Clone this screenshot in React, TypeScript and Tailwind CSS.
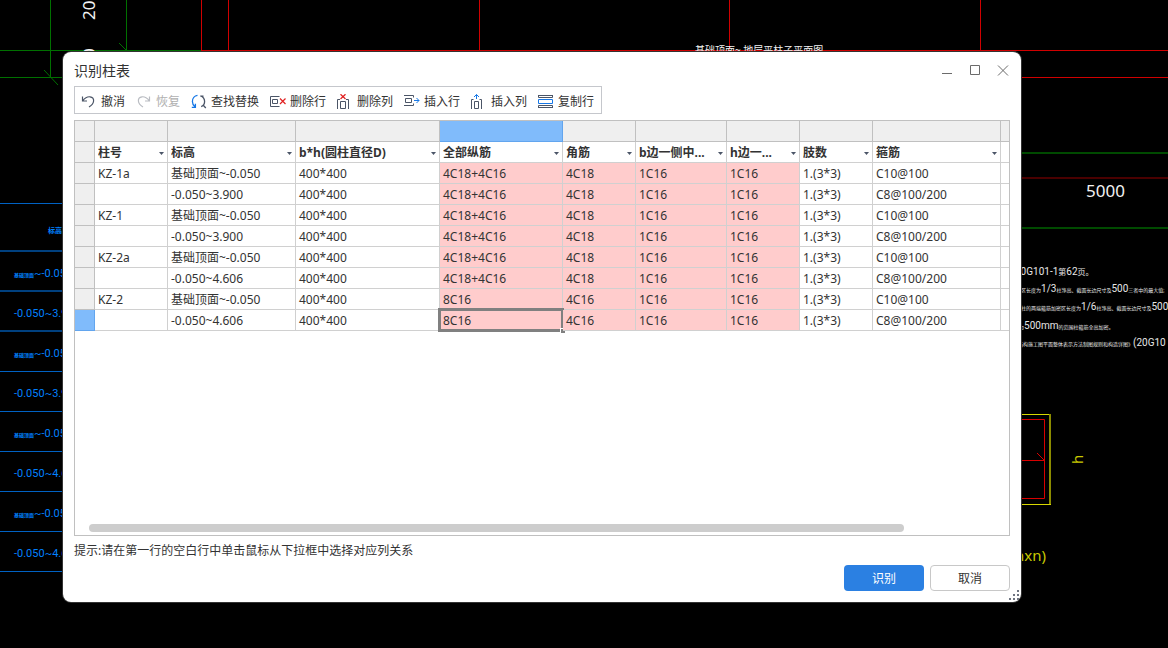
import React, { useState } from 'react';
import clsx from 'clsx';

type Row = string[];

const columns = [
  { label: '柱号', width: 'w-[73px]' },
  { label: '标高', width: 'w-[128px]' },
  { label: 'b*h(圆柱直径D)', width: 'w-[144px]' },
  { label: '全部纵筋', width: 'w-[123px]', marked: true },
  { label: '角筋', width: 'w-[73px]', marked: true },
  { label: 'b边一侧中...', width: 'w-[91px]', marked: true },
  { label: 'h边一...', width: 'w-[73px]', marked: true },
  { label: '肢数', width: 'w-[73px]' },
  { label: '箍筋', width: 'w-[128px]' },
];

const rows: Row[] = [
  ['KZ-1a', '基础顶面~-0.050', '400*400', '4C18+4C16', '4C18', '1C16', '1C16', '1.(3*3)', 'C10@100'],
  ['', '-0.050~3.900', '400*400', '4C18+4C16', '4C18', '1C16', '1C16', '1.(3*3)', 'C8@100/200'],
  ['KZ-1', '基础顶面~-0.050', '400*400', '4C18+4C16', '4C18', '1C16', '1C16', '1.(3*3)', 'C10@100'],
  ['', '-0.050~3.900', '400*400', '4C18+4C16', '4C18', '1C16', '1C16', '1.(3*3)', 'C8@100/200'],
  ['KZ-2a', '基础顶面~-0.050', '400*400', '4C18+4C16', '4C18', '1C16', '1C16', '1.(3*3)', 'C10@100'],
  ['', '-0.050~4.606', '400*400', '4C18+4C16', '4C18', '1C16', '1C16', '1.(3*3)', 'C8@100/200'],
  ['KZ-2', '基础顶面~-0.050', '400*400', '8C16', '4C16', '1C16', '1C16', '1.(3*3)', 'C10@100'],
  ['', '-0.050~4.606', '400*400', '8C16', '4C16', '1C16', '1C16', '1.(3*3)', 'C8@100/200'],
];

const Icon: React.FC<{ children: React.ReactNode }> = ({ children }) => (
  <svg className="h-4 w-4 shrink-0" viewBox="0 0 16 16" fill="none" stroke="#4b5567" aria-hidden="true">
    {children}
  </svg>
);

const tools = [
  {
    label: '撤消',
    icon: (
      <Icon>
        <path d="M1.500 2.500V7H6M1.800 6.700C4 3.900 6.600 2.500 9 2.800c2.400.3 3.800 2 3.600 4.200-.2 2.400-1.800 4.300-4.600 6" strokeWidth="1.2" />
      </Icon>
    ),
  },
  {
    label: '恢复',
    disabled: true,
    icon: (
      <Icon>
        <path d="M13.500 2.500V7H9M13.200 6.700C11 3.900 8.400 2.500 6 2.800 3.600 3.100 2.200 4.800 2.400 7c.2 2.400 1.800 4.300 4.600 6" stroke="#b9bcc2" strokeWidth="1.2" />
      </Icon>
    ),
  },
  {
    label: '查找替换',
    icon: (
      <Icon>
        <path d="M6.500 1.300C3.500 1.700 1.400 4.400 1.400 7.500c0 2.200 1 4 2.600 5.200M.8 13.300h3.600V9.800" stroke="#1677e6" strokeWidth="1.300" />
        <path d="M9.300 2.200h3.200M9.600 1.800c2.600 1 4 3.100 4 5.700 0 2.400-1.200 4.300-3.400 5.200M11.800 10.800l3 3.200" strokeWidth="1.300" />
      </Icon>
    ),
  },
  {
    label: '删除行',
    icon: (
      <Icon>
        <path d="M9.500 2.500H.5v10h9M2.500 5.500h5v4h-5z" />
        <path d="M10 4.500l5.500 5.500M15.500 4.500L10 10" stroke="#e02020" strokeWidth="1.200" />
      </Icon>
    ),
  },
  {
    label: '删除列',
    icon: (
      <Icon>
        <path d="M.5 15v-9.500h2.500M11.500 15v-9.500h-2.500M3.500 7.500h5v7h-5z" />
        <path d="M3.500.2l5 4.800M8.500.2l-5 4.800" stroke="#e02020" strokeWidth="1.200" />
      </Icon>
    ),
  },
  {
    label: '插入行',
    icon: (
      <Icon>
        <path d="M0 1.500h9.500v2M0 11.500h9.500v-2M1.500 4.500h6v4h-6z" />
        <path d="M10 6.500h5M12.500 4l2.500 2.500L12.500 9" stroke="#1677e6" />
      </Icon>
    ),
  },
  {
    label: '插入列',
    icon: (
      <Icon>
        <path d="M.5 15v-9.500h2M10.500 15v-9.500h-2M3.500 7.500h4v7h-4z" />
        <path d="M5.500 5V.5M3 3L5.500.5 8 3" stroke="#1677e6" />
      </Icon>
    ),
  },
  {
    label: '复制行',
    icon: (
      <Icon>
        <path d="M.5 1v2.500h14V1M0 1.500h15M.5 14v-2.500h14V14M0 13.500h15" />
        <path d="M.5 5.500h14v4H.5z" stroke="#1677e6" />
      </Icon>
    ),
  },
];

const sideRows = [277, 317, 357, 397, 437, 477, 517, 557];
const sideValues = ['', '-0.050~3.9', '', '-0.050~3.9', '', '-0.050~4.6', '', '-0.050~4.6'];

// CAD sheet behind the dialog
const Drawing: React.FC = () => (
  <svg
    className="absolute inset-0 h-full w-full font-['Noto_Sans','Noto_Sans_CJK_SC',sans-serif]"
    fill="none"
    aria-hidden="true"
  >
    <g stroke="#007000">
      <path d="M50.500 0v78M126.500 0v52M0 50.500h201M0 77.500h70M44 70l14 15M119 43l9 9" />
    </g>
    <g stroke="#d00000">
      <path d="M201.500 0v50M228.500 0v50M479.500 0v50M729.500 0v50M980.500 0v50M201 50.500h967M1015 77.500h153" />
    </g>
    <path d="M1015 153h153M1015 228h153" stroke="#004a00" strokeWidth="2" />
    <path d="M1015 178h153" stroke="#4a0000" strokeWidth="2" />

    <g fill="#f2f2f2">
      <text transform="translate(95 20) rotate(-90)" fontSize="17">20</text>
      <text transform="translate(95 58) rotate(-90)" fontSize="17">0</text>
      <text x="695" y="54" fontSize="10">基础顶面~ 地层平柱子平面图</text>
      <text x="1086" y="197" fontSize="17">5000</text>
    </g>

    <g fill="#e6e6e6" fontSize="10" className="font-['Roboto','Noto_Sans_CJK_SC',sans-serif]">
      <text x="1015" y="275">20G101-1<tspan fontSize="8">第</tspan>62<tspan fontSize="8">页。</tspan></text>
      <text x="1021" y="292" fontSize="5">
        区长度为<tspan fontSize="10">1/3</tspan>柱净高、截面长边尺寸及<tspan fontSize="10">500</tspan>三者中的最大值;
      </text>
      <text x="1021" y="310" fontSize="5">
        柱的两端箍筋加密区长度为<tspan fontSize="10">1/6</tspan>柱净高、截面长边尺寸及<tspan fontSize="10">500</tspan>
      </text>
      <text x="1019" y="329" fontSize="5">
        为<tspan fontSize="10">500mm</tspan>的范围柱箍筋全高加密。
      </text>
      <text x="1013" y="346" fontSize="5">
        土结构施工图平面整体表示方法制图规则和构造详图》<tspan fontSize="10">(20G10</tspan>
      </text>
    </g>

    <g stroke="#0062c4">
      <path d="M0 203.500h70M0 371.500h70M0 411.500h70M0 451.500h70M0 491.500h70M0 531.500h70M0 571.500h70" />
      <path d="M0 251h70M0 291h70M0 331h70" stroke="#00407f" strokeWidth="2" />
    </g>
    <g fill="#0080ff" className="font-['Roboto','Noto_Sans_CJK_SC',sans-serif]">
      <text x="48" y="233" fontSize="7" fontWeight="700">标高</text>
      {sideRows.map((y, i) => (
        <text key={y} x="14" y={y} fontSize="11">
          {sideValues[i] || (
            <>
              <tspan fontSize="5" fontWeight="700">基础顶面</tspan>~-0.05
            </>
          )}
        </text>
      ))}
    </g>

    <path d="M1015 414.500h35M1015 504.500h36" stroke="#d8d800" />
    <path d="M1050 414v90" stroke="#8c8c00" strokeWidth="2" />
    <path d="M1015 419.500h29.500v79H1015M1015 460.500h29M1037 453l7 7" stroke="#d80000" />
    <g fill="#c8c800">
      <text transform="translate(1083 464) rotate(-90)" fontSize="15">h</text>
      <text x="1046" y="561" fontSize="15" textAnchor="end">(nxn)</text>
    </g>
  </svg>
);

const TitleBar: React.FC = () => (
  <header className="flex h-[34px] items-center justify-between pt-1 pl-[11px] pr-1">
    <h1 className="text-sm">识别柱表</h1>
    <div className="flex">
      <button type="button" aria-label="最小化" className="grid h-7 w-7 place-content-center">
        <svg className="h-3 w-3" viewBox="0 0 12 12" stroke="#6b6b6b"><path d="M1 8.500h10" /></svg>
      </button>
      <button type="button" aria-label="最大化" className="grid h-7 w-7 place-content-center">
        <svg className="h-3 w-3" viewBox="0 0 12 12" fill="none" stroke="#6b6b6b"><path d="M1.500.5h9v9h-9z" /></svg>
      </button>
      <button type="button" aria-label="关闭" className="grid h-7 w-7 place-content-center">
        <svg className="h-3 w-3" viewBox="0 0 12 12" stroke="#6b6b6b"><path d="M1 .5l10 10M11 .5l-10 10" /></svg>
      </button>
    </div>
  </header>
);

const Toolbar: React.FC = () => (
  <div
    role="toolbar"
    className="flex h-7 items-center gap-[11px] self-start border border-[#c5c7cc] pt-[3px] pr-[7px] pl-1.5"
  >
    {tools.map((tool) => (
      <button
        key={tool.label}
        type="button"
        disabled={tool.disabled}
        className="flex items-center gap-1 whitespace-nowrap disabled:text-[#b0b0b0]"
      >
        {tool.icon}
        {tool.label}
      </button>
    ))}
  </div>
);

const ColumnTable: React.FC = () => {
  const [selected, setSelected] = useState({ row: 7, col: 3 });

  return (
    <table className="w-full table-fixed border-separate border-spacing-0">
      <colgroup>
        <col className="w-5" />
        {columns.map((c) => (
          <col key={c.label} className={c.width} />
        ))}
        <col />
      </colgroup>
      <thead>
        <tr className="h-[21px]">
          <td className="border-r border-b border-[#c0c0c0] bg-[#efefef] p-0" />
          {columns.map((c, i) => (
            <td
              key={c.label}
              className={clsx(
                'border-r border-b p-0',
                i === selected.col ? 'border-[#62a5ee] bg-[#80bbfb]' : 'border-[#c0c0c0] bg-[#efefef]'
              )}
            />
          ))}
          <td className="border-b border-[#c0c0c0] bg-[#efefef] p-0" />
        </tr>
        <tr className="h-[21px]">
          <td className="border-r border-b border-[#c0c0c0] bg-[#efefef] p-0" />
          {columns.map((c) => (
            <th key={c.label} scope="col" className="border-r border-b border-[#d0d0d0] p-0">
              <div className="flex h-5 items-center pt-0.5 pr-[3px]">
                <select
                  aria-label={c.label}
                  className="min-w-0 flex-1 appearance-none truncate bg-transparent pl-[3px] font-bold outline-none"
                >
                  <option>{c.label}</option>
                </select>
                <svg className="h-[3px] w-[5px] shrink-0" viewBox="0 0 5 3" fill="#4b5567" aria-hidden="true">
                  <path d="M0 0h5L2.500 3z" />
                </svg>
              </div>
            </th>
          ))}
          <td className="border-b border-[#d0d0d0] p-0" />
        </tr>
      </thead>
      <tbody>
        {rows.map((row, r) => (
          <tr key={r} className="h-[21px]">
            <td
              className={clsx(
                'border-r border-b p-0',
                r === selected.row ? 'border-[#62a5ee] bg-[#80bbfb]' : 'border-[#c0c0c0] bg-[#efefef]'
              )}
            />
            {row.map((value, c) => (
              <td
                key={c}
                onClick={() => setSelected({ row: r, col: c })}
                className={clsx(
                  'relative border-r border-b border-[#d0d0d0] pt-0.5 pr-0 pb-0 pl-[3px] leading-[18px] whitespace-nowrap',
                  columns[c].marked && 'bg-[#ffcccc]'
                )}
              >
                {value}
                {r === selected.row && c === selected.col && (
                  <>
                    <span className="absolute -top-0.5 -right-0.5 -bottom-0.5 -left-0.5 border-[3px] border-[#808080]" />
                    <span className="absolute -right-[3px] -bottom-[3px] h-[5px] w-[5px] border-t border-l border-white bg-[#808080]" />
                  </>
                )}
              </td>
            ))}
            <td className="border-b border-[#d0d0d0] p-0" />
          </tr>
        ))}
      </tbody>
    </table>
  );
};

export default function App() {
  return (
    <main className="relative flex min-h-screen flex-col overflow-hidden bg-black pt-[52px] pr-[147px] pb-[46px] pl-[63px]">
      <Drawing />
      <section
        role="dialog"
        aria-label="识别柱表"
        className="relative flex flex-1 flex-col rounded-lg bg-white pb-[11px] font-['Noto_Sans','Noto_Sans_CJK_SC',sans-serif] text-xs text-[#333] ring-1 ring-[#333]"
      >
        <TitleBar />
        <div className="flex flex-1 flex-col px-[11px]">
          <Toolbar />
          <div className="mt-1.5 flex flex-1 flex-col justify-between overflow-hidden border border-[#c0c0c0]">
            <ColumnTable />
            <div className="mr-[105px] mb-[3px] ml-3.5 h-2 rounded-full bg-[#cdcdcd]" />
          </div>
          <p className="mt-1.5 leading-[18px]">提示:请在第一行的空白行中单击鼠标从下拉框中选择对应列关系</p>
          <div className="mt-[5px] flex justify-end gap-1.5">
            <button type="button" className="h-[26px] w-20 rounded bg-[#2b80e2] pt-0.5 text-white">识别</button>
            <button type="button" className="h-[26px] w-20 rounded border border-[#c8c8c8] bg-white pt-0.5">取消</button>
          </div>
        </div>
        <svg className="absolute right-0.5 bottom-0.5 h-[10px] w-[10px]" viewBox="0 0 10 10" fill="#6e7480" aria-hidden="true">
          <path d="M8 0h2v2H8zM4 4h2v2H4zM8 4h2v2H8zM0 8h2v2H0zM4 8h2v2H4zM8 8h2v2H8z" />
        </svg>
      </section>
    </main>
  );
}
